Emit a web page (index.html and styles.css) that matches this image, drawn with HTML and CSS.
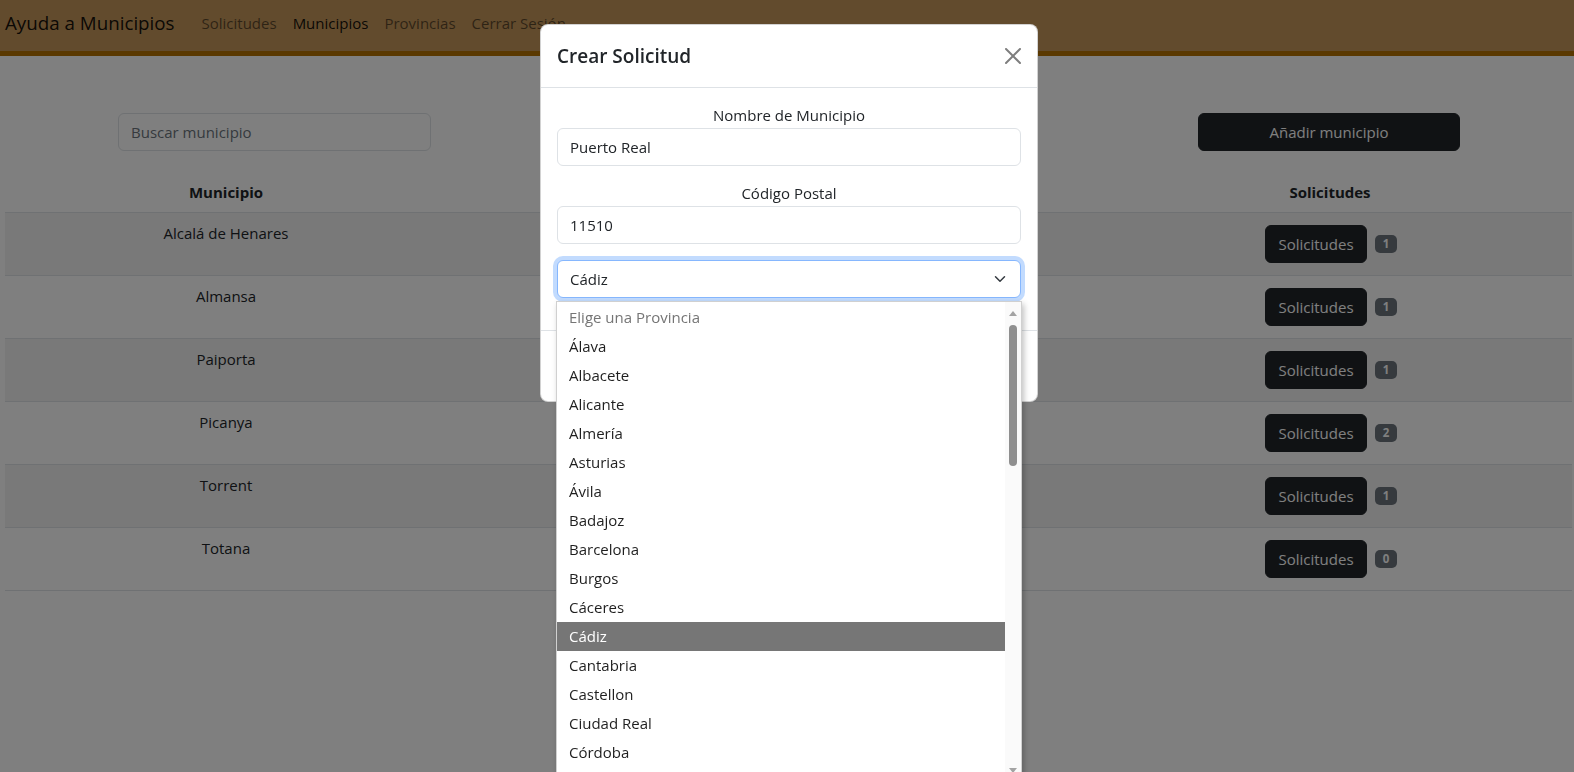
FILE: index.html
```html
<!DOCTYPE html>
<html lang="es">
<head>
<meta charset="utf-8">
<title>Ayuda a Municipios</title>
<link rel="stylesheet" href="styles.css">
</head>
<body>
<nav class="navbar">
  <a class="brand" href="#">Ayuda a Municipios</a>
  <ul class="nav">
    <li><a class="nav-link" href="#">Solicitudes</a></li>
    <li><a class="nav-link active" href="#">Municipios</a></li>
    <li><a class="nav-link" href="#">Provincias</a></li>
    <li><a class="nav-link" href="#">Cerrar Sesión</a></li>
  </ul>
</nav>

<main class="content">
  <div class="toolbar">
    <input class="form-control search" type="text" placeholder="Buscar municipio">
    <button class="btn btn-dark add-btn">Añadir municipio</button>
  </div>

  <table class="table">
    <thead>
      <tr><th class="col-mun">Municipio</th><th class="col-mid"></th><th class="col-sol">Solicitudes</th></tr>
    </thead>
    <tbody>
      <tr><td>Alcalá de Henares</td><td></td><td><div class="sol-cell"><button class="btn btn-dark">Solicitudes</button><span class="badge">1</span></div></td></tr>
      <tr><td>Almansa</td><td></td><td><div class="sol-cell"><button class="btn btn-dark">Solicitudes</button><span class="badge">1</span></div></td></tr>
      <tr><td>Paiporta</td><td></td><td><div class="sol-cell"><button class="btn btn-dark">Solicitudes</button><span class="badge">1</span></div></td></tr>
      <tr><td>Picanya</td><td></td><td><div class="sol-cell"><button class="btn btn-dark">Solicitudes</button><span class="badge">2</span></div></td></tr>
      <tr><td>Torrent</td><td></td><td><div class="sol-cell"><button class="btn btn-dark">Solicitudes</button><span class="badge">1</span></div></td></tr>
      <tr><td>Totana</td><td></td><td><div class="sol-cell"><button class="btn btn-dark">Solicitudes</button><span class="badge">0</span></div></td></tr>
    </tbody>
  </table>
</main>

<div class="backdrop"></div>

<div class="modal">
  <div class="modal-header">
    <h5 class="modal-title">Crear Solicitud</h5>
    <button class="btn-close" aria-label="Cerrar">
      <svg width="16" height="16" viewBox="0 0 16 16"><path d="M.293.293a1 1 0 0 1 1.414 0L8 6.586 14.293.293a1 1 0 1 1 1.414 1.414L9.414 8l6.293 6.293a1 1 0 0 1-1.414 1.414L8 9.414l-6.293 6.293a1 1 0 0 1-1.414-1.414L6.586 8 .293 1.707a1 1 0 0 1 0-1.414z"/></svg>
    </button>
  </div>
  <div class="modal-body">
    <div class="field">
      <label class="form-label">Nombre de Municipio</label>
      <input class="form-control" type="text" value="Puerto Real">
    </div>
    <div class="field">
      <label class="form-label">Código Postal</label>
      <input class="form-control" type="text" value="11510">
    </div>
    <div class="field">
      <div class="form-select focused">
        <span>Cádiz</span>
        <svg width="16" height="12" viewBox="0 0 16 16"><path fill="none" stroke="#343a40" stroke-linecap="round" stroke-linejoin="round" stroke-width="2" d="m2 5 6 6 6-6"/></svg>
      </div>
    </div>
  </div>
  <div class="modal-footer">
    <button class="btn btn-secondary">Cerrar</button>
    <button class="btn btn-primary">Guardar</button>
  </div>
</div>

<div class="select-popup">
  <ul class="options">
    <li class="placeholder">Elige una Provincia</li>
    <li>Álava</li>
    <li>Albacete</li>
    <li>Alicante</li>
    <li>Almería</li>
    <li>Asturias</li>
    <li>Ávila</li>
    <li>Badajoz</li>
    <li>Barcelona</li>
    <li>Burgos</li>
    <li>Cáceres</li>
    <li class="selected">Cádiz</li>
    <li>Cantabria</li>
    <li>Castellon</li>
    <li>Ciudad Real</li>
    <li>Córdoba</li>
  </ul>
  <div class="scrollbar">
    <span class="arrow-up"></span>
    <span class="thumb"></span>
    <span class="spacer"></span>
    <span class="arrow-down"></span>
  </div>
</div>
</body>
</html>
```

FILE: styles.css
```css
* { box-sizing: border-box; }

html, body {
  margin: 0;
  padding: 0;
  height: 100%;
  overflow: hidden;
}

body {
  font-family: "Open Sans", "Noto Sans", sans-serif;
  font-size: 15px;
  line-height: 24px;
  color: #212529;
  background: #fff;
}

/* ---------- navbar ---------- */
.navbar {
  display: flex;
  align-items: center;
  height: 56px;
  padding: 0 0 0 5px;
  background: #c4965a;
  border-bottom: 5px solid #b47000;
}

.brand {
  font-size: 18.75px;
  line-height: 30px;
  color: rgba(0,0,0,.9);
  text-decoration: none;
  margin-right: 19px;
  padding-bottom: 5px;
}

.nav {
  display: flex;
  list-style: none;
  margin: 0;
  padding: 0 0 6px 0;
}

.nav-link {
  display: block;
  padding: 8px 8px;
  color: rgba(0,0,0,.55);
  text-decoration: none;
}

.nav-link.active { color: rgba(0,0,0,.9); }

/* ---------- content ---------- */
.content {
  padding-top: 57px;
}

.toolbar {
  display: flex;
  justify-content: space-between;
  padding: 0 114px 0 118px;
}

.form-control {
  display: block;
  width: 100%;
  height: 38px;
  padding: 6px 12px;
  font: inherit;
  text-align: left;
  color: #212529;
  background: #fff;
  border: 1px solid #dee2e6;
  border-radius: 6px;
}

.form-control::placeholder { color: #6c757d; }

.toolbar .search { width: 313px; flex: none; }

.btn {
  display: inline-block;
  height: 38px;
  padding: 6px 12px;
  font: inherit;
  border: 1px solid transparent;
  border-radius: 6px;
  cursor: pointer;
}

.btn-dark { background: #212529; color: #fff; border-color: #212529; }
.btn-secondary { background: #6c757d; color: #fff; }
.btn-primary { background: #0d6efd; color: #fff; }

.toolbar .add-btn { width: 262px; flex: none; }

/* ---------- table ---------- */
.table {
  margin: 21px 2px 0 5px;
  width: calc(100% - 7px);
  border-collapse: collapse;
  text-align: center;
}

.table th, .table td {
  padding: 8px;
  vertical-align: top;
  border-bottom: 1px solid #dee2e6;
}

.table th { font-weight: 700; }

.col-mun { width: 442px; }
.col-sol { width: 484px; }

.table tbody tr:nth-child(odd) td { background: rgba(0,0,0,.05); }

.sol-cell {
  display: flex;
  justify-content: center;
  align-items: center;
  gap: 8px;
  padding-left: 2px;
}

.sol-cell .btn { margin: 4px 0; width: 102px; padding: 6px 0; }

.badge {
  display: inline-block;
  min-width: 22px;
  padding: 0 7px;
  font-size: 11.5px;
  line-height: 18px;
  font-weight: 700;
  color: #fff;
  background: #6c757d;
  border-radius: 5px;
}

/* ---------- modal ---------- */
.backdrop {
  position: fixed;
  inset: 0;
  background: rgba(0,0,0,.5);
}

.modal {
  position: fixed;
  top: 24px;
  left: 540px;
  width: 498px;
  background: #fff;
  border: 1px solid rgba(0,0,0,.175);
  border-radius: 8px;
}

.modal-header {
  display: flex;
  align-items: center;
  padding: 16px;
  border-bottom: 1px solid #dee2e6;
}

.modal-title {
  margin: 0;
  font-size: 19px;
  line-height: 30px;
  font-weight: 600;
}

.btn-close {
  margin: -8px -8px -8px auto;
  padding: 8px;
  width: 32px;
  height: 32px;
  border: 0;
  background: transparent;
  opacity: .5;
}

.btn-close svg { display: block; }

.modal-body { padding: 16px; }

.field {
  margin-bottom: 16px;
  text-align: center;
}

.form-label { display: block; line-height: 23px; padding-bottom: 1px; }

.form-select {
  display: flex;
  align-items: center;
  justify-content: space-between;
  width: 100%;
  height: 38px;
  padding: 6px 12px;
  text-align: left;
  border: 1px solid #dee2e6;
  border-radius: 6px;
  background: #fff;
}

.form-select.focused {
  border-color: #86b7fe;
  box-shadow: 0 0 0 4px rgba(13,110,253,.25);
}

.modal-footer {
  display: flex;
  justify-content: flex-end;
  padding: 12px;
  border-top: 1px solid #dee2e6;
}

.modal-footer .btn { margin: 4px; }

/* ---------- native select popup ---------- */
.select-popup {
  position: fixed;
  top: 301px;
  left: 556px;
  width: 466px;
  height: 476px;
  display: flex;
  background: #fff;
  border: 1px solid #d0d0d0;
  box-shadow: 2px 3px 6px rgba(0,0,0,.25);
}

.options {
  flex: 1;
  margin: 0;
  padding: 1px 0 0;
  list-style: none;
}

.options li {
  height: 29px;
  line-height: 29px;
  padding-left: 12px;
  color: #1f1f1f;
}

.options li.placeholder { color: #757575; }

.options li.selected {
  background: #767676;
  color: #fff;
}

.scrollbar {
  width: 16px;
  display: flex;
  flex-direction: column;
  align-items: center;
  background: #fafafa;
  padding: 9px 0 3px;
}

.arrow-up, .arrow-down {
  width: 0;
  height: 0;
  border-left: 4px solid transparent;
  border-right: 4px solid transparent;
}

.arrow-up { border-bottom: 5px solid #a3a3a3; }
.arrow-down { border-top: 5px solid #a3a3a3; }

.thumb {
  margin-top: 9px;
  width: 8px;
  height: 141px;
  border-radius: 4px;
  background: #8f8f8f;
}

.spacer { flex: 1; }
```
